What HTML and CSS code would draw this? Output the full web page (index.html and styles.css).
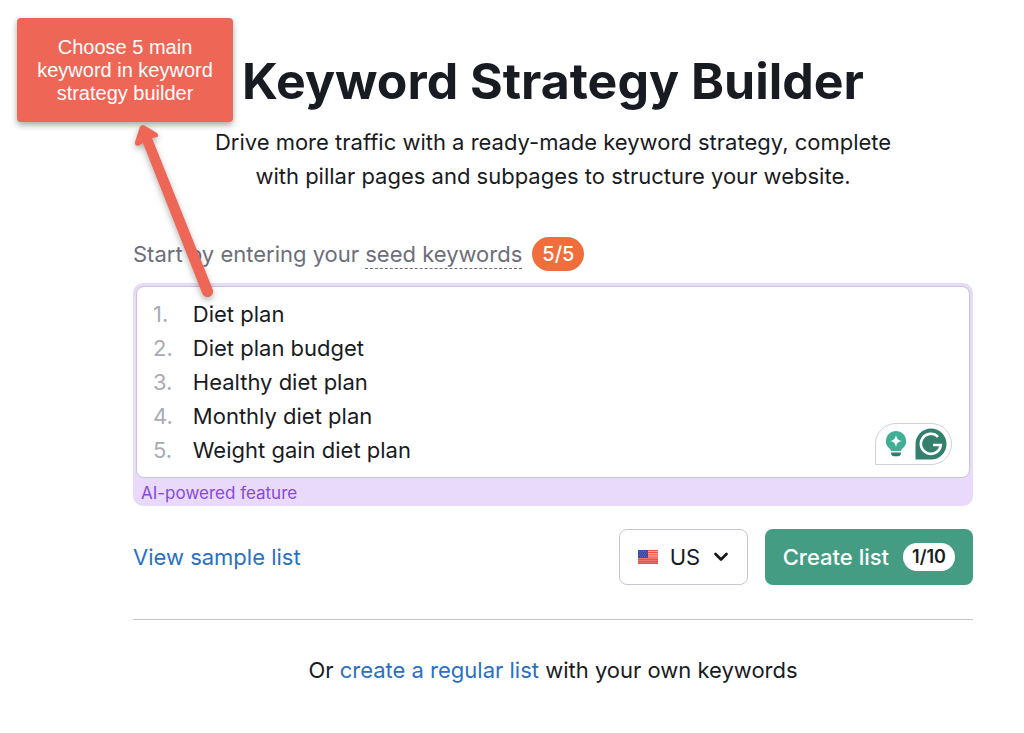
FILE: index.html
```html
<!DOCTYPE html>
<html lang="en">
<head>
    <meta charset="UTF-8">
    <meta name="viewport" content="width=device-width, initial-scale=1.0">
    <title>Keyword Strategy Builder</title>
    <link rel="stylesheet" href="styles.css">
</head>
<body>

<main class="container">
    <header class="header">
        <h1>Keyword Strategy Builder</h1>
        <p>Drive more traffic with a ready-made keyword strategy, complete with pillar pages and subpages to structure your website.</p>
    </header>

    <form class="builder-form">
        <div class="seed-row">
            <label for="keywords">Start by entering your <span class="hint">seed keywords</span></label>
            <span class="counter">5/5</span>
        </div>

        <div class="ai-box">
            <div class="keywords-box">
                <ol class="line-numbers">
                    <li>1.</li>
                    <li>2.</li>
                    <li>3.</li>
                    <li>4.</li>
                    <li>5.</li>
                </ol>
                <textarea id="keywords" name="keywords" rows="5" spellcheck="false">Diet plan
Diet plan budget
Healthy diet plan
Monthly diet plan
Weight gain diet plan</textarea>
                <div class="assistant">
                    <button type="button" class="assistant-button" aria-label="Suggestions">
                        <svg width="22" height="28" viewBox="0 0 22 28">
                            <path d="M11 1A10 10 0 0 0 4.500 18.600Q6 19.800 6 21H16Q16 19.800 17.500 18.600A10 10 0 0 0 11 1z" fill="#3fb096"/>
                            <path d="M11 5c.8 4 2 5.200 6 6-4 .8-5.200 2-6 6-.8-4-2-5.200-6-6 4-.8 5.200-2 6-6z" fill="#fff"/>
                            <path d="M6 22.500h10c0 2.700-1 3.700-3 3.700H9c-2 0-3-1-3-3.700z" fill="#2f7d6c"/>
                        </svg>
                    </button>
                    <button type="button" class="assistant-button" aria-label="Check writing">
                        <svg width="32" height="32" viewBox="0 0 32 32">
                            <path d="M16 0.500a15.500 15.500 0 0 1 0 31H0.500V16A15.500 15.500 0 0 1 16 .5z" fill="#34806f"/>
                            <path d="M23 8.800A10 10 0 1 0 25.800 17H18" fill="none" stroke="#fff" stroke-width="2.600"/>
                        </svg>
                    </button>
                </div>
            </div>
            <div class="ai-note">AI-powered feature</div>
        </div>

        <div class="actions">
            <a href="#sample" class="sample-link">View sample list</a>
            <div class="country">
                <svg width="20" height="14" viewBox="0 0 20 14">
                    <rect width="20" height="14" fill="#f9c4c0"/>
                    <rect y="8" width="20" height="6" fill="#f5857d"/>
                    <path d="M0 .5h20M0 2.700h20M0 4.900h20M0 7.100h20M0 9.300h20M0 11.500h20M0 13.500h20" stroke="#ea5049" stroke-width="1.300"/>
                    <rect width="10" height="8" fill="#3c4aa8"/>
                    <path d="M1 1.500h8M2 3.200h8M1 4.900h8M2 6.600h8" stroke="#6670ba" stroke-width=".8" stroke-dasharray="1 1"/>
                </svg>
                <select name="country" aria-label="Country">
                    <option>US</option>
                </select>
                <svg class="chevron" width="16" height="10" viewBox="0 0 16 10">
                    <path d="M2.500 2l5.500 5.500L13.500 2" fill="none" stroke="#191b23" stroke-width="2.800" stroke-linecap="round" stroke-linejoin="round"/>
                </svg>
            </div>
            <button type="submit" class="create-button">Create list <span class="limit">1/10</span></button>
        </div>
    </form>

    <footer class="footer">
        Or <a href="#regular">create a regular list</a> with your own keywords
    </footer>
</main>

<!-- Annotation on top of the page -->
<div class="callout">Choose 5 main keyword in keyword strategy builder</div>
<svg class="arrow" width="100" height="190" viewBox="0 0 100 190">
    <path d="M10 5.500Q12 3 14.500 4.500L27 12Q30 16 25.500 16.500L22 17L82.500 168A5.500 5.500 0 0 1 72.500 173L13 22L9 24.500Q4.500 25.500 5 21z" fill="#ee6655"/>
</svg>

</body>
</html>
```

FILE: styles.css
```css
body {
    font-family: Inter, "Liberation Sans", sans-serif;
    font-size: 22px;
    line-height: 34px;
    color: #191b23;
    background-color: #fff;
    margin: 0;
}

button, select, textarea {
    font: inherit;
    color: inherit;
}

a {
    color: #2970c5;
    text-decoration: none;
}

.container {
    max-width: 840px;
    margin-left: 133px;
    margin-right: 51px;
    padding-top: 50px;
}

.header {
    text-align: center;
    margin-bottom: 44px;
}

.header h1 {
    font-size: 50px;
    line-height: 62px;
    font-weight: 700;
    margin: 0 0 13px;
}

.header p {
    max-width: 720px;
    margin: 0 auto;
}

/* Seed keywords */
.seed-row {
    display: flex;
    align-items: center;
    gap: 10px;
    color: #6c6e79;
    margin-bottom: 12px;
}

.hint {
    display: inline-block;
    line-height: 28px;
    border-bottom: 1px dashed #6c6e79;
}

.counter {
    background-color: #f06e3c;
    color: #fff;
    font-size: 20px;
    font-weight: 500;
    padding: 0 10px;
    border-radius: 17px;
}

.ai-box {
    background-color: #e9dafb;
    border-radius: 10px;
    padding: 3px;
}

.keywords-box {
    position: relative;
    display: flex;
    gap: 20px;
    background-color: #fff;
    border: 1px solid #c4c7cf;
    border-radius: 8px;
    padding: 10px 16px;
}

.line-numbers {
    list-style: none;
    margin: 0;
    padding: 0;
    color: #a9abb6;
}

.keywords-box textarea {
    flex: 1;
    height: 170px;
    border: none;
    outline: none;
    padding: 0;
    resize: none;
    background: none;
}

/* Floating writing assistant in the corner of the text box */
.assistant {
    position: absolute;
    right: 17px;
    bottom: 12px;
    display: flex;
    align-items: center;
    gap: 8px;
    background-color: #fff;
    border: 1px solid #cfd0e0;
    border-radius: 21px 21px 21px 0;
    padding: 4px 4px 4px 9px;
}

.assistant-button {
    display: flex;
    background: none;
    border: none;
    padding: 0;
    cursor: pointer;
}

.ai-note {
    color: #8649e1;
    font-size: 17px;
    line-height: 20px;
    padding: 5px 5px 0;
}

/* Buttons */
.actions {
    display: flex;
    align-items: center;
    gap: 17px;
    padding: 23px 0 34px;
    border-bottom: 1px solid #c4c7cf;
}

.sample-link {
    margin-right: auto;
}

.country {
    display: flex;
    align-items: center;
    height: 54px;
    border: 1px solid #c4c7cf;
    border-radius: 8px;
    padding: 0 18px;
    gap: 12px;
}

.country select {
    appearance: none;
    border: none;
    outline: none;
    background: none;
    padding: 0;
}

.create-button {
    display: flex;
    align-items: center;
    gap: 14px;
    height: 56px;
    background-color: #449c83;
    color: #fff;
    font-weight: 500;
    border: none;
    border-radius: 8px;
    padding: 0 18px;
    cursor: pointer;
}

.limit {
    background-color: #fff;
    color: #191b23;
    font-size: 18px;
    font-weight: 600;
    line-height: 28px;
    padding: 0 9px;
    border-radius: 14px;
}

.footer {
    text-align: center;
    padding: 33px 0;
}

/* Annotation */
.callout {
    position: absolute;
    top: 18px;
    left: 17px;
    box-sizing: border-box;
    width: 216px;
    padding: 18px 20px 17px;
    background-color: #ee6655;
    color: #fff;
    font-family: "Liberation Sans", Arial, sans-serif;
    font-size: 20px;
    line-height: 23px;
    text-align: center;
    border-radius: 4px;
    box-shadow: 0 3px 6px rgba(0, 0, 0, 0.35);
}

.arrow {
    position: absolute;
    top: 121px;
    left: 130px;
    pointer-events: none;
    filter: drop-shadow(0 3px 3px rgba(0, 0, 0, 0.3));
}
```
